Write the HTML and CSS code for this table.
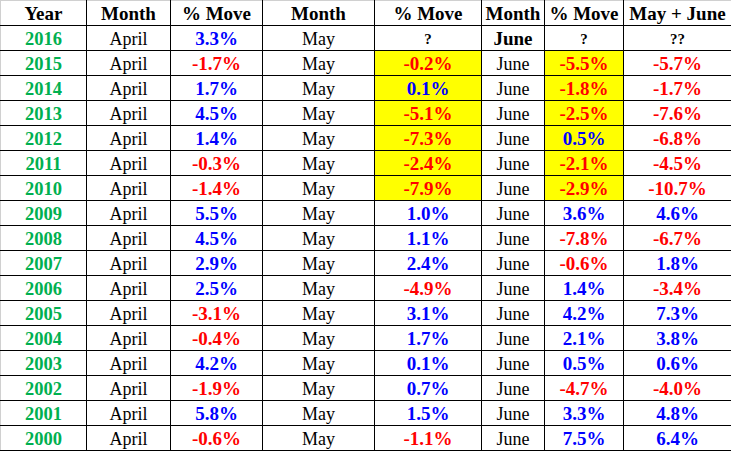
FILE: index.html
```html
<!DOCTYPE html>
<html>
<head>
<meta charset="utf-8">
<link rel="stylesheet" href="styles.css">
</head>
<body>
<table class="grid">
<colgroup>
<col class="c1"><col class="c2"><col class="c3"><col class="c4"><col class="c5"><col class="c6"><col class="c7"><col class="c8">
</colgroup>
<thead>
<tr><th>Year</th><th>Month</th><th>% Move</th><th>Month</th><th>% Move</th><th>Month</th><th>% Move</th><th>May + June</th></tr>
</thead>
<tbody>
<tr><td class="yr">2016</td><td>April</td><td class="up">3.3%</td><td>May</td><td class="q">?</td><td class="b">June</td><td class="q">?</td><td class="q">??</td></tr>
<tr><td class="yr">2015</td><td>April</td><td class="dn">-1.7%</td><td>May</td><td class="dn hl">-0.2%</td><td>June</td><td class="dn hl">-5.5%</td><td class="dn">-5.7%</td></tr>
<tr><td class="yr">2014</td><td>April</td><td class="up">1.7%</td><td>May</td><td class="up hl">0.1%</td><td>June</td><td class="dn hl">-1.8%</td><td class="dn">-1.7%</td></tr>
<tr><td class="yr">2013</td><td>April</td><td class="up">4.5%</td><td>May</td><td class="dn hl">-5.1%</td><td>June</td><td class="dn hl">-2.5%</td><td class="dn">-7.6%</td></tr>
<tr><td class="yr">2012</td><td>April</td><td class="up">1.4%</td><td>May</td><td class="dn hl">-7.3%</td><td>June</td><td class="up hl">0.5%</td><td class="dn">-6.8%</td></tr>
<tr><td class="yr">2011</td><td>April</td><td class="dn">-0.3%</td><td>May</td><td class="dn hl">-2.4%</td><td>June</td><td class="dn hl">-2.1%</td><td class="dn">-4.5%</td></tr>
<tr><td class="yr">2010</td><td>April</td><td class="dn">-1.4%</td><td>May</td><td class="dn hl">-7.9%</td><td>June</td><td class="dn hl">-2.9%</td><td class="dn">-10.7%</td></tr>
<tr><td class="yr">2009</td><td>April</td><td class="up">5.5%</td><td>May</td><td class="up">1.0%</td><td>June</td><td class="up">3.6%</td><td class="up">4.6%</td></tr>
<tr><td class="yr">2008</td><td>April</td><td class="up">4.5%</td><td>May</td><td class="up">1.1%</td><td>June</td><td class="dn">-7.8%</td><td class="dn">-6.7%</td></tr>
<tr><td class="yr">2007</td><td>April</td><td class="up">2.9%</td><td>May</td><td class="up">2.4%</td><td>June</td><td class="dn">-0.6%</td><td class="up">1.8%</td></tr>
<tr><td class="yr">2006</td><td>April</td><td class="up">2.5%</td><td>May</td><td class="dn">-4.9%</td><td>June</td><td class="up">1.4%</td><td class="dn">-3.4%</td></tr>
<tr><td class="yr">2005</td><td>April</td><td class="dn">-3.1%</td><td>May</td><td class="up">3.1%</td><td>June</td><td class="up">4.2%</td><td class="up">7.3%</td></tr>
<tr><td class="yr">2004</td><td>April</td><td class="dn">-0.4%</td><td>May</td><td class="up">1.7%</td><td>June</td><td class="up">2.1%</td><td class="up">3.8%</td></tr>
<tr><td class="yr">2003</td><td>April</td><td class="up">4.2%</td><td>May</td><td class="up">0.1%</td><td>June</td><td class="up">0.5%</td><td class="up">0.6%</td></tr>
<tr><td class="yr">2002</td><td>April</td><td class="dn">-1.9%</td><td>May</td><td class="up">0.7%</td><td>June</td><td class="dn">-4.7%</td><td class="dn">-4.0%</td></tr>
<tr><td class="yr">2001</td><td>April</td><td class="up">5.8%</td><td>May</td><td class="up">1.5%</td><td>June</td><td class="up">3.3%</td><td class="up">4.8%</td></tr>
<tr><td class="yr">2000</td><td>April</td><td class="dn">-0.6%</td><td>May</td><td class="dn">-1.1%</td><td>June</td><td class="up">7.5%</td><td class="up">6.4%</td></tr>
</tbody>
</table>
</body>
</html>
```
FILE: styles.css
```css
html, body {
  margin: 0;
  padding: 0;
  background: #ffffff;
}
.grid {
  border-collapse: collapse;
  table-layout: fixed;
  width: 731px;
  font-family: "Liberation Serif", "Times New Roman", serif;
  font-size: 18px;
  color: #000000;
}
.c1 { width: 86px; }
.c2 { width: 84px; }
.c3 { width: 92px; }
.c4 { width: 112px; }
.c5 { width: 107px; }
.c6 { width: 63px; }
.c7 { width: 79px; }
.c8 { width: 108px; }
.grid th, .grid td {
  border: 1px solid #000000;
  height: 23px;
  padding: 1px 0 0 0;
  text-align: center;
  vertical-align: middle;
  line-height: 22px;
  white-space: nowrap;
  overflow: hidden;
}
.grid th { font-weight: bold; font-size: 19px; }
.grid thead th { border-top-color: #d0d0d0; }
.grid th:first-child, .grid td:first-child { border-left-color: #d0d0d0; }
.yr { color: #00b050; font-weight: bold; font-size: 18.5px; }
.up { color: #0000ff; font-weight: bold; font-size: 19px; }
.dn { color: #ff0000; font-weight: bold; font-size: 19px; }
.b { font-weight: bold; font-size: 19px; }
.q { font-weight: bold; font-size: 15px; }
.hl { background: #ffff00; }
```
